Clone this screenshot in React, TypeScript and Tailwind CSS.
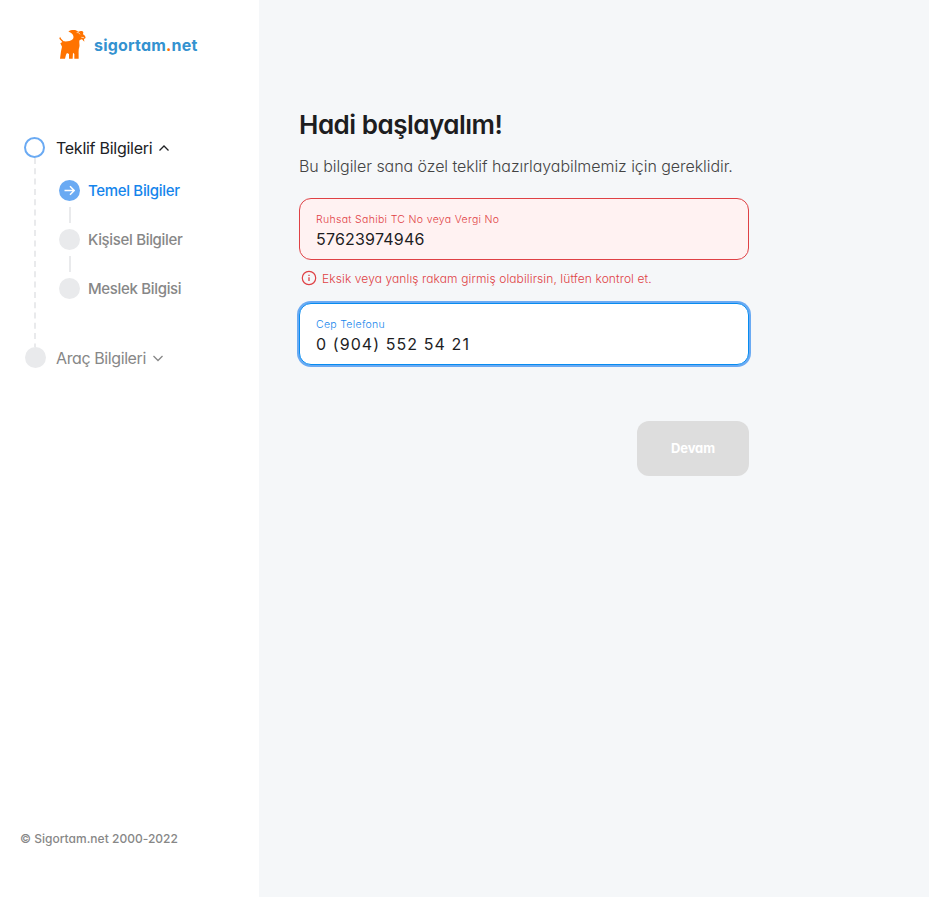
import { ReactNode } from 'react';

function Goat() {
  return (
    <svg className="h-[29px] w-[27px] shrink-0" viewBox="15 16 81 87" fill="#ff7300">
      <path d="M43 21C49 15 62 14 68 18L73 21C80 18 87 19 88 23L87 29C93 32 96 38 94 41L90 43L91 51L84 44L77 46C74 53 78 59 76 67C73 74 74 86 74 102H61L61 88L57 84L56 102H45L45 88L39 85L36 90L33 102H18L21 80L24 66L19 56L25 52L16 42L18 36L22 43L29 50C37 51 50 50 56 44C60 39 59 32 54 27C51 23 47 22 43 21Z" />
      <path d="M68 24C73 23 76 25 78 29M82 38L90 39" fill="none" stroke="#fff" strokeWidth="2" />
    </svg>
  );
}

function Chevron({ up = false }: { up?: boolean }) {
  return (
    <svg className="h-[8px] w-[12px] shrink-0" viewBox="0 0 12 8" fill="none" stroke="currentColor" strokeWidth="1.3">
      <path d={up ? 'M1.500 6.500 6 2l4.500 4.500' : 'M1.500 2 6 6.500 10.500 2'} />
    </svg>
  );
}

function SubStep({ children, active = false }: { children: ReactNode; active?: boolean }) {
  return (
    <div className={`flex h-[21px] items-center gap-2 text-[15px] font-medium tracking-[-0.33px] ${active ? 'text-[#1585ec]' : 'text-[#878787]'}`}>
      <span className={`flex size-[21px] shrink-0 items-center justify-center rounded-full ${active ? 'bg-[#6aaaf3]' : 'bg-[#e9eaec]'}`}>
        {active && (
          <svg className="size-[11px]" viewBox="0 0 11 11" fill="none" stroke="#fff" strokeWidth="1.500">
            <path d="M.5 5.500h9.500M6 1.300l4.200 4.200L6 9.700" />
          </svg>
        )}
      </span>
      <span className="pt-[2px]">{children}</span>
    </div>
  );
}

function Connector() {
  return <div className="my-[6px] ml-[10px] h-4 w-[2px] bg-[#e9eaec]" />;
}

export default function App() {
  return (
    <div className="flex h-[897px] w-full bg-[#f5f7f9] [font-family:Inter,'Liberation_Sans',sans-serif] [font-feature-settings:'cv11']">
      <aside className="flex w-[259px] shrink-0 flex-col bg-white pb-[50px]">
        <div className="flex h-[59px] items-end gap-[8px] pl-[59px]">
          <Goat />
          <span className="mb-[2px] text-[16px] leading-6 font-bold tracking-[0.2px] text-[#3492d0]">
            sigortam<span className="text-[#ff7300]">.</span>net
          </span>
        </div>

        <nav className="mt-[78px] pl-[24px]">
          <div className="flex h-[21px] items-center text-[16px] tracking-[-0.27px] text-[#202124]">
            <span className="size-[21px] rounded-full border-2 border-[#6aaaf3]" />
            <span className="ml-[11px] w-[97px] whitespace-nowrap">Teklif Bilgileri</span>
            <span className="ml-[5px] pt-px"><Chevron up /></span>
          </div>
          <div className="flex h-[189px]">
            <svg className="ml-[10px] h-[189px] w-[2px] shrink-0" viewBox="0 0 2 189">
              <path d="M1 0v189" stroke="#e9eaec" strokeWidth="2" strokeDasharray="6 4.300" />
            </svg>
            <div className="ml-[23px] pt-[22px]">
              <SubStep active>Temel Bilgiler</SubStep>
              <Connector />
              <SubStep>Kişisel Bilgiler</SubStep>
              <Connector />
              <SubStep>Meslek Bilgisi</SubStep>
            </div>
          </div>
          <div className="flex h-[21px] items-center pl-px text-[16px] tracking-[-0.4px] text-[#878787]">
            <span className="size-[21px] rounded-full bg-[#e9eaec]" />
            <span className="ml-[10px] w-[90px] whitespace-nowrap">Araç Bilgileri</span>
            <span className="ml-[6px] pt-px"><Chevron /></span>
          </div>
        </nav>

        <footer className="mt-auto pl-[20px] text-[12px] leading-4 font-medium tracking-[0.02px] text-[#878787]">© Sigortam.net 2000-2022</footer>
      </aside>

      <main className="ml-[40px] w-[450px] pt-[108px]">
        <h1 className="h-[34px] text-[26px] leading-[34px] font-semibold tracking-[-0.5px] whitespace-nowrap text-[#1d1d1f]">Hadi başlayalım!</h1>
        <p className="mt-[12px] h-[25px] text-[16px] leading-6 font-light tracking-[-0.055px] whitespace-nowrap text-[#444]">
          Bu bilgiler sana özel teklif hazırlayabilmemiz için gereklidir.
        </p>

        <div className="mt-[19px] h-[62px] rounded-[12px] border border-[#df4145] bg-[#fff2f2] px-4 pt-[13px]">
          <div className="text-[10.5px] leading-4 font-light tracking-[0.32px] text-[#df4145]">Ruhsat Sahibi TC No veya Vergi No</div>
          <div className="mt-px text-[16px] leading-5 tracking-[0.2px] text-[#1d1d1f]">57623974946</div>
        </div>
        <div className="mt-[11px] flex h-[15px] items-center text-[12px] font-light tracking-[0.1px] whitespace-nowrap text-[#df4145]">
          <svg className="mr-[5px] mb-px ml-[2px] size-4 shrink-0" viewBox="0 0 16 16" fill="none" stroke="#df4145">
            <circle cx="8" cy="8" r="6.700" strokeWidth="1.200" />
            <path d="M8 7.200v3.800M8 4.800v1.300" strokeWidth="1.300" />
          </svg>
          <span className="pt-px">Eksik veya yanlış rakam girmiş olabilirsin, lütfen kontrol et.</span>
        </div>

        <div className="mt-[17px] h-[62px] rounded-[12px] border border-[#078cf0] bg-white px-4 pt-[13px] ring-2 ring-[#6aaaf3]">
          <div className="text-[10.5px] leading-4 font-light tracking-[0.3px] text-[#1585ec]">Cep Telefonu</div>
          <div className="mt-px text-[16px] leading-5 tracking-[1.08px] text-[#1d1d1f]">0 (904) 552 54 21</div>
        </div>

        <button className="mt-[56px] ml-auto block h-[55px] w-[112px] rounded-[12px] bg-[#ddd] text-[13px] font-bold tracking-[-0.15px] text-white">Devam</button>
      </main>
    </div>
  );
}
